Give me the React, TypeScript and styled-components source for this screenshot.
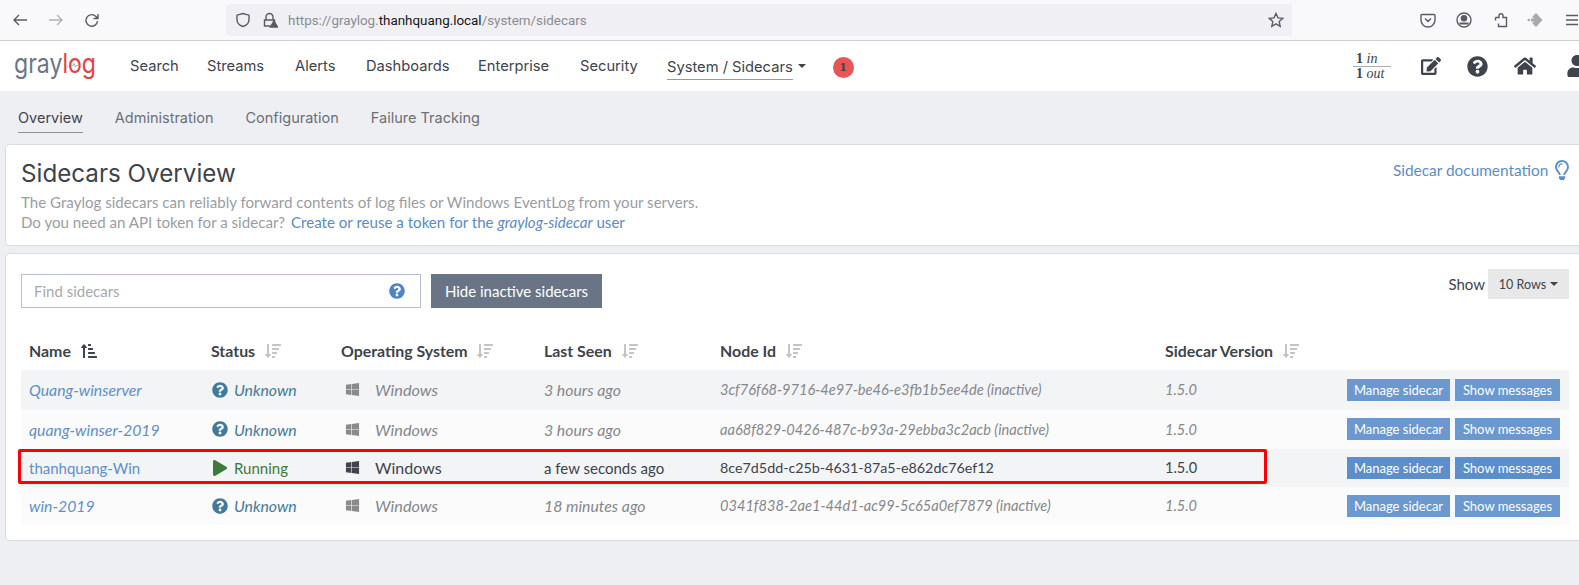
import styled, { createGlobalStyle } from 'styled-components';
import { FaEdit, FaHome, FaPlay, FaQuestionCircle, FaRegLightbulb, FaSortAmountDown, FaSortAmountUpAlt, FaUser, FaWindows } from 'react-icons/fa';

const GlobalStyle = createGlobalStyle`
  html, body {
    margin: 0;
    height: 585px;
    overflow: hidden;
    background: #eeeff2;
    font-family: "Lato", "Liberation Sans", sans-serif;
  }
`;

const Page = styled.div`
  width: 1579px;
  height: 585px;
  overflow: hidden;
`;

// browser chrome
const BrowserBar = styled.div`
  height: 40px;
  background: #f9f9fb;
  border-bottom: 1px solid #cfcfd2;
  display: flex;
  align-items: center;
  padding-left: 12px;
`;
const ChromeIcon = styled.svg<{ $ml: number; $dim?: boolean }>`
  width: 16px;
  height: 16px;
  flex: none;
  margin-left: ${(p) => p.$ml}px;
  fill: none;
  stroke: #5b5b66;
  stroke-width: 1.4;
  opacity: ${(p) => (p.$dim ? 0.45 : 1)};
`;
const UrlBar = styled.div`
  width: 1066px;
  height: 32px;
  flex: none;
  margin-left: 126px;
  background: #f0f0f4;
  border-radius: 4px;
  display: flex;
  align-items: center;
  padding: 0 8px 0 9px;
  box-sizing: border-box;
  font-family: "Roboto", sans-serif;
  font-size: 13.4px;
  color: #8b8b92;
`;
const UrlText = styled.div`
  margin-left: 10px;
  flex: 1;
  b {
    font-weight: 400;
    color: #15141a;
  }
`;

// graylog top nav
const TopNav = styled.nav`
  height: 50px;
  background: #fff;
  display: flex;
  align-items: center;
  padding-left: 14px;
  font-family: "Inter", sans-serif;
  font-size: 14.7px;
  color: #3e434c;
`;
const Logo = styled.svg`
  width: 90px;
  height: 40px;
  flex: none;
  margin-right: 26px;
`;
const NavItem = styled.a<{ $w: number }>`
  width: ${(p) => p.$w}px;
  flex: none;
  margin-bottom: 1px;
`;
const ActiveNav = styled.a`
  flex: none;
  padding: 5px 0 3px;
  border-bottom: 1px solid #9a9a9a;
`;
const Caret = styled.span`
  display: inline-block;
  width: 0;
  height: 0;
  border-left: 4px solid transparent;
  border-right: 4px solid transparent;
  border-top: 4px solid #3e434c;
`;
const NavCaret = styled(Caret)`
  margin: 0 27px 0 5px;
`;
const Badge = styled.span`
  width: 21px;
  height: 21px;
  margin-top: 2px;
  border-radius: 50%;
  background: #eb5454;
  color: #3e434c;
  font-family: "DejaVu Serif", serif;
  font-size: 11px;
  font-weight: 700;
  display: flex;
  align-items: center;
  justify-content: center;
`;
const Throughput = styled.div`
  margin-left: auto;
  width: 38px;
  font-family: "Liberation Serif", serif;
  font-size: 14px;
  line-height: 14px;
  padding-left: 3px;
  box-sizing: border-box;
  margin-right: 30px;
  i {
    font-style: italic;
  }
  div + div {
    border-top: 1px solid #a9acb2;
    margin-left: -3px;
    padding-left: 3px;
  }
`;
const NavIcons = styled.div`
  display: flex;
  align-items: center;
  gap: 26px;
  color: #3e434c;
  width: 158px;
  flex: none;
  overflow: hidden;
  svg {
    flex: none;
  }
  svg:last-child {
    margin-left: 4px;
  }
`;

// sub navigation
const SubNav = styled.div`
  height: 53px;
  display: flex;
  gap: 32px;
  padding: 18px 0 0 18px;
  box-sizing: border-box;
  font-family: "Inter", sans-serif;
  font-size: 14.5px;
  color: #6a7078;
`;
const SubItem = styled.a<{ $active?: boolean }>`
  height: 23px;
  color: ${(p) => (p.$active ? '#3e434c' : '#6a7078')};
  border-bottom: ${(p) => (p.$active ? '1px solid #8b9099' : 'none')};
`;

const Card = styled.section`
  background: #fff;
  border: 1px solid #d9dce3;
  border-radius: 4px;
  margin-left: 5px;
  width: 1590px;
  box-sizing: border-box;
`;
const HeaderCard = styled(Card)`
  height: 102px;
  margin-bottom: 7px;
  padding: 11px 0 0 15px;
  display: flex;
`;
const HeaderText = styled.div`
  width: 1372px;
  flex: none;
`;
const Title = styled.h1`
  margin: 0;
  font-family: "Inter", sans-serif;
  font-weight: 400;
  font-size: 24.2px;
  line-height: 35px;
  color: #3e434c;
`;
const Lead = styled.p`
  margin: 1px 0 0;
  font-size: 15.1px;
  line-height: 20px;
  color: #9a9da3;
`;
const Link = styled.a`
  color: #5a8bc9;
  margin-left: 2px;
`;
const DocLink = styled.a`
  color: #5b8ecb;
  font-size: 15.4px;
  line-height: 20px;
  margin-top: 4px;
  align-self: flex-start;
  display: flex;
  align-items: center;
  gap: 4px;
  white-space: nowrap;
`;

const TableCard = styled(Card)`
  height: 288px;
  padding: 15px 0 0 15px;
`;
const ControlRow = styled.div`
  width: 1548px;
  display: flex;
  align-items: flex-start;
`;
const SearchForm = styled.div`
  display: flex;
  gap: 10px;
  margin-top: 5px;
`;
const SearchBox = styled.div`
  width: 400px;
  height: 34px;
  box-sizing: border-box;
  border: 1px solid #b5c1d2;
  display: flex;
  align-items: center;
  justify-content: space-between;
  padding: 0 15px 0 12px;
  font-size: 15px;
  color: #a5a8ae;
  svg {
    color: #5082c4;
  }
`;
const HideButton = styled.button`
  width: 171px;
  height: 34px;
  border: 0;
  background: #697586;
  color: #fff;
  font: inherit;
  font-size: 15px;
  padding: 0;
`;
const ShowControl = styled.div`
  margin-left: auto;
  display: flex;
  align-items: center;
  gap: 3px;
  color: #3e434c;
  font-size: 15px;
`;
const RowsSelect = styled.div`
  width: 81px;
  height: 30px;
  background: #e8e8e8;
  font-size: 12.5px;
  display: flex;
  align-items: center;
  justify-content: center;
  gap: 4px;
`;

const TableWrap = styled.div`
  position: relative;
  width: 1548px;
  margin-top: 22px;
`;
const Table = styled.table`
  width: 1548px;
  table-layout: fixed;
  border-collapse: collapse;
  font-size: 15px;
`;
const Col = styled.col<{ $w: number }>`
  width: ${(p) => p.$w}px;
`;
const Th = styled.th`
  height: 40px;
  padding: 0 0 0 8px;
  text-align: left;
  font-weight: 700;
  font-size: 15.9px;
  color: #3e434c;
  white-space: nowrap;
  svg {
    margin-left: 6px;
    vertical-align: -2px;
    color: #c2c4c7;
  }
`;
const ActiveSort = styled.span`
  svg {
    color: #3e434c;
  }
`;
const Tr = styled.tr<{ $h: number; $odd: boolean; $active?: boolean }>`
  height: ${(p) => p.$h}px;
  background: ${(p) => (p.$odd ? '#f3f4f6' : '#fbfbfc')};
  color: ${(p) => (p.$active ? '#3e434c' : '#85878b')};
  font-style: ${(p) => (p.$active ? 'normal' : 'italic')};
  font-size: ${(p) => (p.$active ? '15px' : '15.8px')};
`;
const Td = styled.td`
  padding: 0 0 1px 8px;
  white-space: nowrap;
`;
const IdCell = styled(Td)<{ $active?: boolean }>`
  font-size: ${(p) => (p.$active ? '14.3px' : '14.6px')};
`;
const NameLink = styled.a`
  color: #5f8fcb;
`;
const Status = styled.span<{ $running: boolean }>`
  display: flex;
  align-items: center;
  gap: 6px;
  margin-left: 1px;
  color: ${(p) => (p.$running ? '#3b7a3b' : '#417a9b')};
`;
const OsCell = styled.span<{ $active?: boolean }>`
  display: flex;
  align-items: center;
  gap: 15px;
  margin-left: 4px;
  font-size: ${(p) => (p.$active ? '16px' : '16.3px')};
  svg {
    color: ${(p) => (p.$active ? '#3e434c' : '#8a8a8a')};
  }
`;
const Actions = styled.div`
  display: flex;
  align-items: center;
  justify-content: flex-end;
  gap: 5px;
  padding-right: 9px;
`;
const Version = styled.span`
  margin-right: auto;
  font-size: 14.5px;
`;
const SmallButton = styled.button<{ $w: number; $active?: boolean }>`
  width: ${(p) => p.$w}px;
  height: 22px;
  border: 0;
  padding: 0;
  background: ${(p) => (p.$active ? '#5b8ecb' : '#6a98cf')};
  color: #fff;
  font: inherit;
  font-style: normal;
  font-size: 13px;
`;
const Highlight = styled.div`
  position: absolute;
  left: -3px;
  top: 119px;
  width: 1249px;
  height: 35px;
  border: 3px solid #ff0000;
  border-radius: 2px;
  box-sizing: border-box;
  pointer-events: none;
`;

const columns = [182, 130, 203, 176, 445, 412];
const sortable = ['Status', 'Operating System', 'Last Seen', 'Node Id', 'Sidecar Version'];

const rows = [
  { name: 'Quang-winserver', seen: '3 hours ago', id: '3cf76f68-9716-4e97-be46-e3fb1b5ee4de (inactive)', h: 40 },
  { name: 'quang-winser-2019', seen: '3 hours ago', id: 'aa68f829-0426-487c-b93a-29ebba3c2acb (inactive)', h: 39 },
  { name: 'thanhquang-Win', seen: 'a few seconds ago', id: '8ce7d5dd-c25b-4631-87a5-e862dc76ef12', h: 38, active: true },
  { name: 'win-2019', seen: '18 minutes ago', id: '0341f838-2ae1-44d1-ac99-5c65a0ef7879 (inactive)', h: 38 },
];

export default function App() {
  return (
    <Page>
      <GlobalStyle />
      <BrowserBar>
        <ChromeIcon $ml={0} viewBox="0 0 16 16"><path d="M15 8H2M7 3 2 8l5 5" /></ChromeIcon>
        <ChromeIcon $ml={20} $dim viewBox="0 0 16 16"><path d="M1 8h13M9 3l5 5-5 5" /></ChromeIcon>
        <ChromeIcon $ml={20} viewBox="0 0 16 16"><path d="M13.5 9a5.8 5.8 0 1 1-1.6-4.6L14 6.5M14 2v4.5H9.5" /></ChromeIcon>
        <UrlBar>
          <ChromeIcon $ml={0} viewBox="0 0 16 16"><path d="M8 1.5 2 3.2v4.3c0 3.5 2.8 6 6 7 3.2-1 6-3.5 6-7V3.2z" /></ChromeIcon>
          <ChromeIcon $ml={11} viewBox="0 0 16 16"><path d="M4 8V5a3.5 3.5 0 0 1 7 0v3M2.5 8h10v6h-10z" /><path d="M12 9l3.5 6h-7z" fill="#5b5b66" /></ChromeIcon>
          <UrlText>https://graylog.<b>thanhquang.local</b>/system/sidecars</UrlText>
          <ChromeIcon $ml={0} viewBox="0 0 16 16"><path d="m8 1.5 2 4.4 4.7.5-3.5 3.2 1 4.7L8 11.9l-4.2 2.4 1-4.7L1.3 6.4 6 5.9z" /></ChromeIcon>
        </UrlBar>
        <ChromeIcon $ml={128} viewBox="0 0 16 16"><path d="M2 2.5h12a1 1 0 0 1 1 1V8a7 7 0 0 1-14 0V3.500a1 1 0 0 1 1-1zM5 6.500l3 3 3-3" /></ChromeIcon>
        <ChromeIcon $ml={20} viewBox="0 0 16 16"><circle cx="8" cy="8" r="7" /><circle cx="8" cy="6.300" r="2.600" fill="#5b5b66" /><path d="M3.500 11.500h9" strokeWidth="2" /></ChromeIcon>
        <ChromeIcon $ml={21} viewBox="0 0 16 16"><path d="M2.500 5.500H6V3.800a2 2 0 1 1 4 0v1.700h3.500v9h-8v-3M2.500 5.500v3" /></ChromeIcon>
        <ChromeIcon $ml={18} viewBox="0 0 16 16"><path d="M9 1l6.500 7L9 15l-4-4 2.500-1.500H4v-3h3.500L5 5z" fill="#a9a9ad" stroke="none" /><circle cx="1.800" cy="8" r="1.300" fill="#a9a9ad" stroke="none" /></ChromeIcon>
        <ChromeIcon $ml={21} viewBox="0 0 14 16"><path d="M1 3.500h12M1 8h12M1 12.500h12" /></ChromeIcon>
      </BrowserBar>

      <TopNav>
        <Logo viewBox="0 0 90 40">
          <text x="0" y="27" fontFamily="Inter, sans-serif" fontSize="27" textLength="82" lengthAdjust="spacingAndGlyphs" fill="#6b7585">gray<tspan fill="#e8403f">log</tspan></text>
          <path d="M57 19.500h2l1-2 1.300 3.500 1-1.500h1.500" fill="none" stroke="#8a92a0" strokeWidth="0.700" />
        </Logo>
        <NavItem $w={77}>Search</NavItem>
        <NavItem $w={88}>Streams</NavItem>
        <NavItem $w={71}>Alerts</NavItem>
        <NavItem $w={112}>Dashboards</NavItem>
        <NavItem $w={102}>Enterprise</NavItem>
        <NavItem $w={87}>Security</NavItem>
        <ActiveNav>System / Sidecars</ActiveNav>
        <NavCaret />
        <Badge>1</Badge>
        <Throughput>
          <div><b>1</b> <i>in</i></div>
          <div><b>1</b> <i>out</i></div>
        </Throughput>
        <NavIcons>
          <FaEdit size={20} />
          <FaQuestionCircle size={21} />
          <FaHome size={22} />
          <FaUser size={22} />
        </NavIcons>
      </TopNav>

      <SubNav>
        <SubItem $active>Overview</SubItem>
        <SubItem>Administration</SubItem>
        <SubItem>Configuration</SubItem>
        <SubItem>Failure Tracking</SubItem>
      </SubNav>

      <HeaderCard>
        <HeaderText>
          <Title>Sidecars Overview</Title>
          <Lead>
            The Graylog sidecars can reliably forward contents of log files or Windows EventLog from your servers.<br />
            Do you need an API token for a sidecar? <Link>Create or reuse a token for the <i>graylog-sidecar</i> user</Link>
          </Lead>
        </HeaderText>
        <DocLink>Sidecar documentation <FaRegLightbulb size={20} /></DocLink>
      </HeaderCard>

      <TableCard>
        <ControlRow>
          <SearchForm>
            <SearchBox>Find sidecars <FaQuestionCircle size={16} /></SearchBox>
            <HideButton>Hide inactive sidecars</HideButton>
          </SearchForm>
          <ShowControl>
            Show
            <RowsSelect>10 Rows <Caret /></RowsSelect>
          </ShowControl>
        </ControlRow>
        <TableWrap>
          <Table>
            <colgroup>
              {columns.map((w) => <Col key={w} $w={w} />)}
            </colgroup>
            <thead>
              <tr>
                <Th>Name <ActiveSort><FaSortAmountUpAlt size={16} /></ActiveSort></Th>
                {sortable.map((label) => (
                  <Th key={label}>{label} <FaSortAmountDown size={16} /></Th>
                ))}
              </tr>
            </thead>
            <tbody>
              {rows.map((row, i) => (
                <Tr key={row.id} $h={row.h} $odd={i % 2 === 0} $active={row.active}>
                  <Td><NameLink>{row.name}</NameLink></Td>
                  <Td>
                    <Status $running={!!row.active}>
                      {row.active ? <FaPlay size={16} color="#3b7a3b" /> : <FaQuestionCircle size={16} />}
                      {row.active ? 'Running' : 'Unknown'}
                    </Status>
                  </Td>
                  <Td><OsCell $active={row.active}><FaWindows size={15} /> Windows</OsCell></Td>
                  <Td>{row.seen}</Td>
                  <IdCell $active={row.active}>{row.id}</IdCell>
                  <Td>
                    <Actions>
                      <Version>1.5.0</Version>
                      <SmallButton $w={103} $active={row.active}>Manage sidecar</SmallButton>
                      <SmallButton $w={105} $active={row.active}>Show messages</SmallButton>
                    </Actions>
                  </Td>
                </Tr>
              ))}
            </tbody>
          </Table>
          <Highlight />
        </TableWrap>
      </TableCard>
    </Page>
  );
}
